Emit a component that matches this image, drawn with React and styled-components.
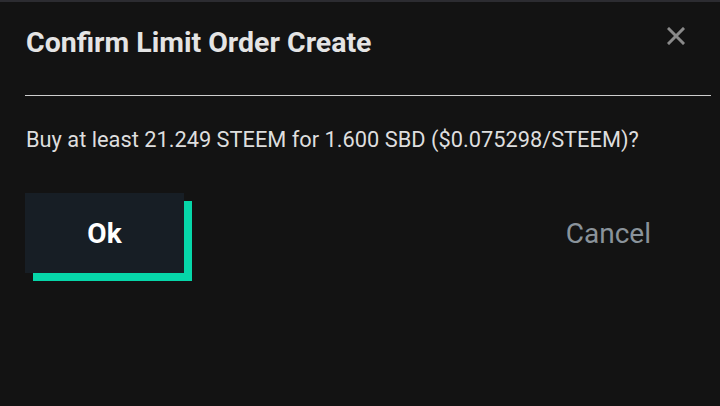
import React from "react";
import styled, { createGlobalStyle } from "styled-components";

const GlobalStyle = createGlobalStyle`
  html, body {
    margin: 0;
    padding: 0;
    background: #131313;
  }
  body {
    font-family: Roboto, "Liberation Sans", sans-serif;
  }
`;

const Modal = styled.div`
  width: 720px;
  height: 406px;
  box-sizing: border-box;
  background: #131313;
  border-top: 2px solid #2c2c31;
  padding: 0 9px 0 25px;
`;

const Header = styled.div`
  display: flex;
  justify-content: space-between;
  align-items: flex-start;
  padding: 24px 0 35px;
  border-bottom: 1px solid #cdcdcd;
`;

const Title = styled.h2`
  margin: 0 0 0 1px;
  font-size: 28.5px;
  line-height: 34px;
  font-weight: 700;
  color: #e4e4e4;
`;

const Close = styled.button`
  background: none;
  border: 0;
  padding: 0;
  margin: 1px 26px 0 0;
  width: 18px;
  height: 18px;
  cursor: pointer;
  display: flex;
`;

const Message = styled.p`
  margin: 30px 0 0 1px;
  font-size: 21.8px;
  line-height: 28px;
  color: #dedede;
`;

const Actions = styled.div`
  display: flex;
  justify-content: space-between;
  align-items: center;
  margin-top: 39px;
`;

const OkButton = styled.button`
  width: 159px;
  height: 80px;
  border: 0;
  background: #171e25;
  box-shadow: 8px 8px 0 #06d6a9;
  color: #ffffff;
  font-family: inherit;
  font-size: 28px;
  font-weight: 700;
  cursor: pointer;
`;

const CancelButton = styled.button`
  background: none;
  border: 0;
  padding: 0;
  margin-right: 60px;
  color: #8a939b;
  font-family: inherit;
  font-size: 28px;
  cursor: pointer;
`;

export default function App() {
  return (
    <>
      <GlobalStyle />
      <Modal>
        <Header>
          <Title>Confirm Limit Order Create</Title>
          <Close aria-label="Close">
            <svg width="18" height="18" viewBox="0 0 18 18">
              <path d="M2 2 L16 16 M16 2 L2 16" stroke="#8a8a8a" strokeWidth="3" strokeLinecap="square" />
            </svg>
          </Close>
        </Header>
        <Message>Buy at least 21.249 STEEM for 1.600 SBD ($0.075298/STEEM)?</Message>
        <Actions>
          <OkButton>Ok</OkButton>
          <CancelButton>Cancel</CancelButton>
        </Actions>
      </Modal>
    </>
  );
}
